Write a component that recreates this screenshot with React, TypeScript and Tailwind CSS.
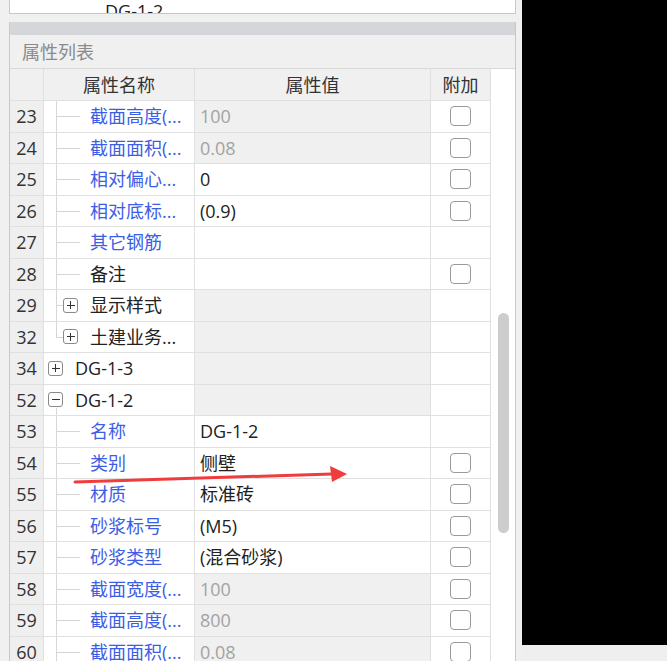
import React from "react";

type Kind = "leaf" | "leafLast" | "childBox" | "childBoxLast" | "root" | "rootOpen";

type Row = {
  n: number;
  name: string;
  value?: string;
  kind: Kind;
  blue?: boolean;
  ro?: boolean;
  check?: boolean;
};

const rows: Row[] = [
  { n: 23, name: "截面高度(...", value: "100", kind: "leaf", blue: true, ro: true, check: true },
  { n: 24, name: "截面面积(...", value: "0.08", kind: "leaf", blue: true, ro: true, check: true },
  { n: 25, name: "相对偏心...", value: "0", kind: "leaf", blue: true, check: true },
  { n: 26, name: "相对底标...", value: "(0.9)", kind: "leaf", blue: true, check: true },
  { n: 27, name: "其它钢筋", kind: "leaf", blue: true },
  { n: 28, name: "备注", kind: "leaf", check: true },
  { n: 29, name: "显示样式", kind: "childBox", ro: true },
  { n: 32, name: "土建业务...", kind: "childBoxLast", ro: true },
  { n: 34, name: "DG-1-3", kind: "root", ro: true },
  { n: 52, name: "DG-1-2", kind: "rootOpen", ro: true },
  { n: 53, name: "名称", value: "DG-1-2", kind: "leaf", blue: true },
  { n: 54, name: "类别", value: "侧壁", kind: "leaf", blue: true, check: true },
  { n: 55, name: "材质", value: "标准砖", kind: "leaf", blue: true, check: true },
  { n: 56, name: "砂浆标号", value: "(M5)", kind: "leaf", blue: true, check: true },
  { n: 57, name: "砂浆类型", value: "(混合砂浆)", kind: "leaf", blue: true, check: true },
  { n: 58, name: "截面宽度(...", value: "100", kind: "leaf", blue: true, ro: true, check: true },
  { n: 59, name: "截面高度(...", value: "800", kind: "leaf", blue: true, ro: true, check: true },
  { n: 60, name: "截面面积(...", value: "0.08", kind: "leaf", blue: true, ro: true, check: true },
];

function ToggleBox({ open }: { open: boolean }) {
  return (
    <span className="relative flex h-[15px] w-[15px] items-center justify-center rounded-[3px] border border-[#8a8a8a] bg-white">
      <span className="absolute h-px w-[8px] bg-[#333]" />
      {!open && <span className="absolute h-[8px] w-px bg-[#333]" />}
    </span>
  );
}

function NameCell({ row }: { row: Row }) {
  const color = row.blue ? "text-[#3c5ee6]" : "text-[#222]";
  const isRoot = row.kind === "root" || row.kind === "rootOpen";
  const isChildBox = row.kind === "childBox" || row.kind === "childBoxLast";
  return (
    <div className="relative h-full w-[151px] shrink-0 border-r border-[#e0e0e0] bg-white">
      {/* tree guides */}
      {(row.kind === "leaf" || row.kind === "childBox") && (
        <span className="absolute left-[12px] top-0 h-full w-px bg-[#d6d6d6]" />
      )}
      {(row.kind === "leafLast" || row.kind === "childBoxLast") && (
        <span className="absolute left-[12px] top-0 h-1/2 w-px bg-[#d6d6d6]" />
      )}
      {(row.kind === "leaf" || row.kind === "leafLast") && (
        <span className="absolute left-[12px] top-1/2 h-px w-[24px] bg-[#d6d6d6]" />
      )}
      {isChildBox && <span className="absolute left-[12px] top-1/2 h-px w-[8px] bg-[#d6d6d6]" />}
      {row.kind === "rootOpen" && (
        <span className="absolute left-[12px] top-[23px] bottom-0 w-px bg-[#d6d6d6]" />
      )}
      <div className={`flex h-full items-center ${isRoot ? "pl-[4px]" : isChildBox ? "pl-[19px]" : "pl-[46px]"}`}>
        {isRoot && (
          <span className="mr-[12px]">
            <ToggleBox open={row.kind === "rootOpen"} />
          </span>
        )}
        {isChildBox && (
          <span className="mr-[12px]">
            <ToggleBox open={false} />
          </span>
        )}
        <span className={`whitespace-nowrap ${color}`}>{row.name}</span>
      </div>
    </div>
  );
}

function Checkbox() {
  return <span className="block h-[20px] w-[21px] rounded-[4px] border-[1.5px] border-[#9a9a9a] bg-white" />;
}

export default function App() {
  return (
    <div
      className="relative flex h-[661px] w-[667px] overflow-hidden bg-[#f0f0f0] text-[18px] leading-[24px]"
      style={{ fontFamily: '"Open Sans", "Noto Sans CJK SC", sans-serif' }}
    >
      {/* left: property panel */}
      <div className="flex w-[522px] shrink-0 flex-col pl-[9px] pr-[6px]">
        {/* list box above (cut off) */}
        <div className="h-[14px] shrink-0 overflow-hidden border-x border-b border-[#c8c8c8] bg-white">
          <div className="pl-[95px] leading-[22px] text-[#222]">DG-1-2</div>
        </div>
        <div className="h-[8px] shrink-0" />

        <div className="flex min-h-0 flex-1 flex-col border-x border-[#c8c8c8]">
          <div className="h-[13px] shrink-0 bg-[#d5d6da]" />
          <div className="flex h-[34px] shrink-0 items-center border-b border-[#d8d8d8] bg-[#f0f0f0] pl-[12px] text-[#8a8a8a]">
            属性列表
          </div>

          <div className="flex min-h-0 flex-1">
            {/* grid */}
            <div className="flex w-[481px] shrink-0 flex-col">
              <div className="flex h-[32px] shrink-0 border-b border-[#e0e0e0] bg-[#f0f0f0] text-[#333]">
                <div className="w-[34px] shrink-0 border-r border-[#e0e0e0]" />
                <div className="flex w-[151px] shrink-0 items-center justify-center border-r border-[#e0e0e0]">属性名称</div>
                <div className="flex w-[236px] shrink-0 items-center justify-center border-r border-[#e0e0e0]">属性值</div>
                <div className="flex w-[60px] shrink-0 items-center justify-center border-r border-[#e0e0e0]">附加</div>
              </div>

              {rows.map((row) => (
                <div key={row.n} className="flex h-[31.5px] shrink-0 border-b border-[#e0e0e0]">
                  <div className="flex w-[34px] shrink-0 items-center justify-center border-r border-[#e0e0e0] bg-[#efefef] text-[#333]">
                    {row.n}
                  </div>
                  <NameCell row={row} />
                  <div
                    className={`flex w-[236px] shrink-0 items-center border-r border-[#e0e0e0] pl-[5px] ${
                      row.ro ? "bg-[#f0f0f0] text-[#a3a3a3]" : "bg-white text-[#222]"
                    }`}
                  >
                    {row.value}
                  </div>
                  <div className="flex w-[60px] shrink-0 items-center justify-center border-r border-[#e0e0e0] bg-white">
                    {row.check && <Checkbox />}
                  </div>
                </div>
              ))}
            </div>

            {/* scrollbar */}
            <div className="flex-1 bg-white">
              <div className="ml-[7px] mt-[244px] h-[220px] w-[11px] rounded-full bg-[#cdcdcd]" />
            </div>
          </div>
        </div>
      </div>

      {/* right */}
      <div className="flex flex-1 flex-col">
        <div className="h-[645px] bg-black" />
        <div className="flex-1 bg-[#efefef]" />
      </div>

      {/* red annotation arrow */}
      <svg className="pointer-events-none absolute left-0 top-0" width="667" height="661">
        <line x1="75" y1="482" x2="332" y2="474" stroke="#f03c3c" strokeWidth="3" strokeLinecap="round" />
        <polygon points="330,466 347,474 332,482" fill="#f03c3c" />
      </svg>
    </div>
  );
}
